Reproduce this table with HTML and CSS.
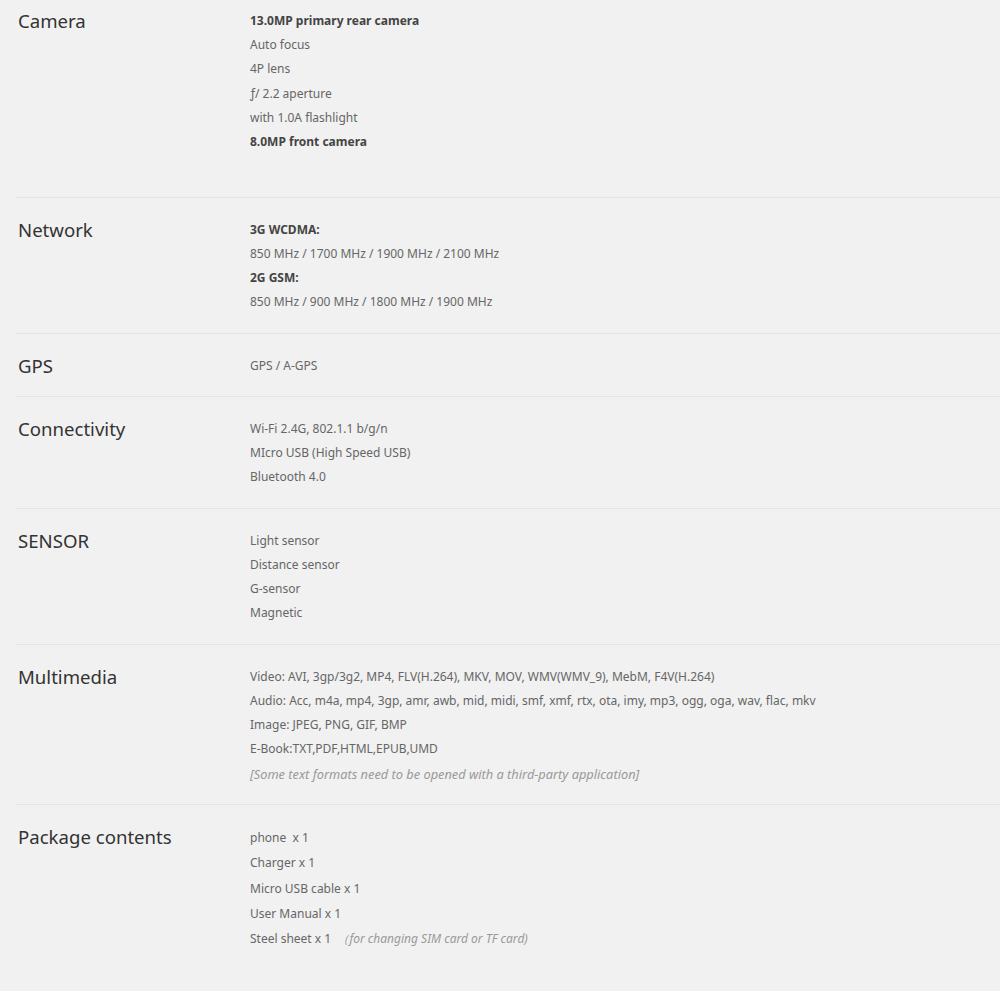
FILE: index.html
```html
<!DOCTYPE html>
<html lang="en">
<head>
    <meta charset="UTF-8">
    <meta name="viewport" content="width=device-width, initial-scale=1.0">
    <title>Specifications</title>
    <link rel="stylesheet" href="styles.css">
</head>
<body>
    <div class="specs">
        <div class="spec-row first">
            <div class="spec-name">Camera</div>
            <div class="spec-value">
                <p class="strong">13.0MP primary rear camera</p>
                <p>Auto focus</p>
                <p>4P lens</p>
                <p>ƒ/ 2.2 aperture</p>
                <p>with 1.0A flashlight</p>
                <p class="strong">8.0MP front camera</p>
                <p>&nbsp;</p>
            </div>
        </div>
        <div class="spec-row">
            <div class="spec-name">Network</div>
            <div class="spec-value">
                <p class="strong">3G WCDMA:</p>
                <p>850 MHz / 1700 MHz / 1900 MHz / 2100 MHz</p>
                <p class="strong">2G GSM:</p>
                <p>850 MHz / 900 MHz / 1800 MHz / 1900 MHz</p>
            </div>
        </div>
        <div class="spec-row">
            <div class="spec-name">GPS</div>
            <div class="spec-value">
                <p>GPS / A-GPS</p>
            </div>
        </div>
        <div class="spec-row">
            <div class="spec-name">Connectivity</div>
            <div class="spec-value">
                <p>Wi-Fi 2.4G, 802.1.1 b/g/n</p>
                <p>MIcro USB (High Speed USB)</p>
                <p>Bluetooth 4.0</p>
            </div>
        </div>
        <div class="spec-row">
            <div class="spec-name">SENSOR</div>
            <div class="spec-value">
                <p>Light sensor</p>
                <p>Distance sensor</p>
                <p>G-sensor</p>
                <p>Magnetic</p>
            </div>
        </div>
        <div class="spec-row">
            <div class="spec-name">Multimedia</div>
            <div class="spec-value">
                <p>Video: AVI, 3gp/3g2, MP4, FLV(H.264), MKV, MOV, WMV(WMV_9), MebM, F4V(H.264)</p>
                <p>Audio: Acc, m4a, mp4, 3gp, amr, awb, mid, midi, smf, xmf, rtx, ota, imy, mp3, ogg, oga, wav, flac, mkv</p>
                <p>Image: JPEG, PNG, GIF, BMP</p>
                <p>E-Book:TXT,PDF,HTML,EPUB,UMD</p>
                <p class="note big">[Some text formats need to be opened with a third-party application]</p>
            </div>
        </div>
        <div class="spec-row last">
            <div class="spec-name">Package contents</div>
            <div class="spec-value package">
                <p>phone&nbsp; x 1</p>
                <p>Charger x 1</p>
                <p>Micro USB cable x 1</p>
                <p>User Manual x 1</p>
                <p>Steel sheet x 1 <span class="note">&nbsp;（for changing SIM card or TF card)</span></p>
            </div>
        </div>
    </div>
</body>
</html>
```

FILE: styles.css
```css
body {
    margin: 0;
    background-color: #f1f1f1;
    font-family: "Noto Sans", "Open Sans", sans-serif;
    color: #666;
}
p {
    margin: 0;
}
.specs {
    padding-left: 16px;
}
.spec-row {
    display: flex;
    padding: 20px 0 18.2px;
    border-bottom: 1px solid #e4e4e4;
}
.spec-row.first {
    padding-top: 9px;
}
.spec-row.last {
    border-bottom: none;
}
.spec-name {
    width: 232px;
    flex-shrink: 0;
    padding-left: 2px;
    font-size: 18.6px;
    line-height: 24px;
    color: #333;
}
.spec-value {
    font-size: 12px;
    line-height: 24.2px;
}
.spec-value.package {
    line-height: 25.3px;
}
.strong {
    font-weight: bold;
    color: #444;
}
.note {
    font-style: italic;
    color: #999;
}
.note.big {
    font-size: 12.8px;
}
```
